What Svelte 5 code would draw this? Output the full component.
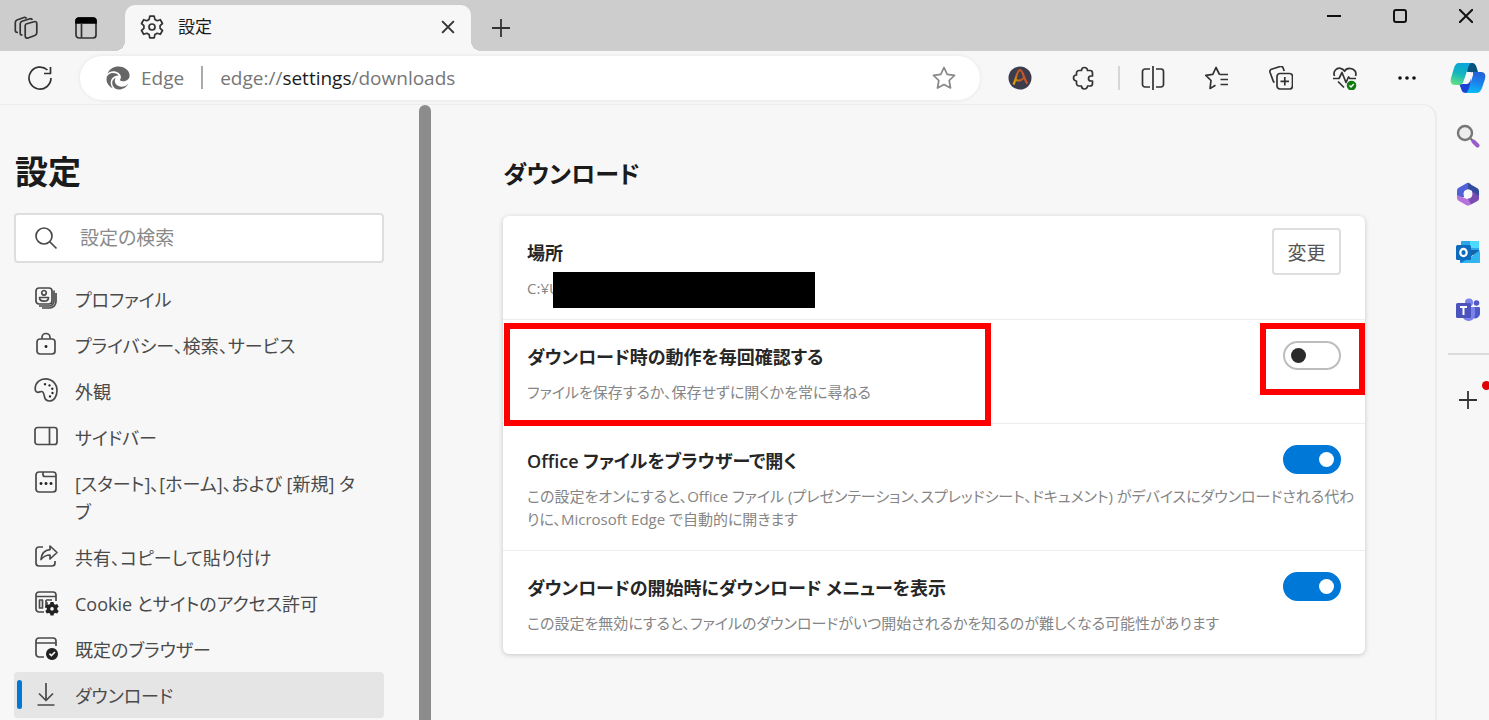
<script>
  const navItems = [
    {
      label: 'プロファイル',
      lines: [
        'M5 2h10a3 3 0 0 1 3 3v10a3 3 0 0 1-3 3H5a3 3 0 0 1-3-3V5a3 3 0 0 1 3-3z',
        'M10 4.5a2.3 2.3 0 1 0 .01 0zM5.5 11.5h9c0 2.500-1.800 3.700-4.500 3.700s-4.500-1.200-4.500-3.700z',
        'M20 4.500v10.500a5 5 0 0 1-5 5H5M22 7v8.500a6.500 6.500 0 0 1-6.500 6.500H8',
      ],
    },
    {
      label: 'プライバシー、検索、サービス',
      lines: [
        'M6 7h12a3 3 0 0 1 3 3v9a3 3 0 0 1-3 3H6a3 3 0 0 1-3-3v-9a3 3 0 0 1 3-3z',
        'M8 7V5.500a4 4 0 0 1 8 0V7',
      ],
      solids: ['M12 13a1.500 1.500 0 1 0 .01 0z'],
    },
    {
      label: '外観',
      lines: [
        'M1.200 10C1.500 4.500 6 .8 11.500.8 18 .8 23 6 23 12.500c0 6-3 10.500-7.500 10.500-3.200 0-4.700-2-5.200-5-.4-2.500-.8-4.500-2.800-4.500-1.300 0-2 .8-3.500.8-2 0-3-1.800-2.800-4.300z',
      ],
      solids: [
        'M11 5a1.200 1.200 0 1 0 .01 0z',
        'M15.500 6.200a1.200 1.200 0 1 0 .01 0z',
        'M18.300 9.500a1.200 1.200 0 1 0 .01 0z',
        'M18.500 13.800a1.200 1.200 0 1 0 .01 0z',
        'M16 17.200a1.200 1.200 0 1 0 .01 0z',
      ],
    },
    {
      label: 'サイドバー',
      lines: [
        'M3.500 3.500h17A2.500 2.500 0 0 1 23 6v12a2.500 2.500 0 0 1-2.500 2.500h-17A2.500 2.500 0 0 1 1 18V6A2.500 2.500 0 0 1 3.500 3.500zM15.500 3.500v17',
      ],
    },
    {
      label: '[スタート]、[ホーム]、および [新規] タブ',
      lines: [
        'M5 2h14a3 3 0 0 1 3 3v14a3 3 0 0 1-3 3H5a3 3 0 0 1-3-3V5a3 3 0 0 1 3-3z',
        'M9 2v2.500a2 2 0 0 0 2 2h11',
      ],
      solids: [
        'M7 12a1.500 1.500 0 1 0 .01 0z',
        'M12 12a1.500 1.500 0 1 0 .01 0z',
        'M17 12a1.500 1.500 0 1 0 .01 0z',
      ],
    },
    {
      label: '共有、コピーして貼り付け',
      lines: [
        'M9 3H5a3 3 0 0 0-3 3v13a3 3 0 0 0 3 3h13a3 3 0 0 0 3-3v-2',
        'M16 2l7 6.500-7 6.500v-4c-4 0-6.500 1.500-9 4.500.5-5.500 3.500-9.300 9-9.800z',
      ],
    },
    {
      label: 'Cookie とサイトのアクセス許可',
      lines: [
        'M10 22H5a3 3 0 0 1-3-3V5a3 3 0 0 1 3-3h14a3 3 0 0 1 3 3v6M2 6.500h20',
        'M5.500 10h3v8h-3zM12 10h6M12 13h2M12 10v8',
      ],
      solids: [
        'M16.500 12h3l.5 2 1.200.7 2-.6 1.500 2.600-1.500 1.400v1.400l1.500 1.400-1.500 2.600-2-.6-1.200.7-.5 2h-3l-.5-2-1.200-.7-2 .6-1.500-2.600 1.500-1.400v-1.400l-1.500-1.400 1.500-2.600 2 .6 1.200-.7zM18 17a1.800 1.800 0 1 0 .01 0z',
      ],
    },
    {
      label: '既定のブラウザー',
      lines: [
        'M10 21H5a3 3 0 0 1-3-3V5a3 3 0 0 1 3-3h14a3 3 0 0 1 3 3v5M2 7h20',
      ],
      solids: [
        'M18 12a6 6 0 1 0 .01 0zM14.800 18.200l1.200-1.200 1.400 1.400 3-3 1.200 1.200-4.200 4.200z',
      ],
    },
    {
      label: 'ダウンロード',
      lines: ['M12 1v17M5 11.500l7 7 7-7M3.500 23h17'],
      current: true,
    },
  ];

  let query = $state('');
  let askEachTime = $state(false);
  let openOffice = $state(true);
  let showMenu = $state(true);
</script>

<div class="window">
  <header class="tabstrip">
    <button class="strip-button" aria-label="ワークスペース">
      <svg class="icon" viewBox="0 0 24 24">
        <path d="M12 8l8-2.300a2 2 0 0 1 2.800 2v9a3 3 0 0 1-2 2.800L14 22a2 2 0 0 1-2.800-2v-9A3 3 0 0 1 12 8z" />
        <path d="M8.500 18.800l-.5.200c-1 0-1.800-.7-1.800-1.800V8A3 3 0 0 1 8 5.300l8-2.500c1-.2 2 .2 2.200 1.200" />
        <path d="M4 16.500h-.5C2 16.300 1.300 15.500 1.300 14.500V6.500A3 3 0 0 1 3 4l7-2.500c1.200-.3 2 0 2.600 1" />
      </svg>
    </button>
    <button class="strip-button" aria-label="タブ操作メニュー">
      <svg class="icon" viewBox="0 0 24 24">
        <rect x="2" y="2" width="20" height="20" rx="3" />
        <path class="black" d="M2 7V5a3 3 0 0 1 3-3h14a3 3 0 0 1 3 3v2z" />
        <path d="M7.500 7v15" />
      </svg>
    </button>

    <div class="tab">
      <svg class="icon" viewBox="0 0 24 24">
        <path d="M9.800 1.200h4.400l.7 3.200 2.300 1.300 3.100-1 2.200 3.800-2.400 2.200v2.600l2.400 2.200-2.200 3.800-3.100-1-2.300 1.300-.7 3.200H9.800l-.7-3.200-2.300-1.300-3.100 1-2.200-3.800 2.400-2.200v-2.600L1.500 8.500l2.200-3.800 3.100 1 2.300-1.300z" />
        <circle cx="12" cy="12" r="3" />
      </svg>
      <span class="tab-title">設定</span>
      <button class="tab-close" aria-label="タブを閉じる">
        <svg viewBox="0 0 12 12"><path d="M1 1l10 10M11 1L1 11" /></svg>
      </button>
    </div>
    <button class="new-tab" aria-label="新しいタブ">
      <svg viewBox="0 0 20 20"><path d="M10 1v18M1 10h18" /></svg>
    </button>

    <div class="window-controls">
      <button aria-label="最小化"><svg viewBox="0 0 14 14"><path d="M0 7h14" /></svg></button>
      <button aria-label="最大化"><svg viewBox="0 0 14 14"><rect x="1" y="1" width="12" height="12" rx="2" /></svg></button>
      <button aria-label="閉じる"><svg viewBox="0 0 14 14"><path d="M0 0l14 14M14 0L0 14" /></svg></button>
    </div>
  </header>

  <div class="toolbar">
    <button class="reload" aria-label="更新">
      <svg class="icon" viewBox="0 0 24 24"><path d="M23 12a11 11 0 1 1-3.500-8M22.500 1v6.500H16" /></svg>
    </button>

    <div class="address">
      <svg class="edge-mark" viewBox="0 0 24 24">
        <path d="M1.500 8C3 3 7.500.5 12.500.5 19 .5 24 5 23.600 10c-.3 3.500-3.500 5.500-7 5.200-1.500-.1-2.600-.5-2.600-1.100 0-.5.900-1.300.9-3C14.900 7.500 11 5.300 7.300 5.300 4.700 5.300 2.700 6.300 1.500 8z" />
        <path d="M.5 13c0-3.500 3-6 6.500-6 2.500 0 5 1.200 5.600 2.500C9 9 4.700 12 4.700 16.500c0 2.500.8 4.300 2 5.800C3 20.500.5 17 .5 13z" />
        <path d="M10 11.800C8 13.800 8.500 18 12 19.800c3.500 1.800 7.500 1 10.500-2.300-2 4-6 6.200-10 6-4-.3-6.300-3.500-6.300-6.800 0-2.200 1.500-4.200 3.800-4.900z" />
      </svg>
      <span class="brand">Edge</span>
      <span class="bar"></span>
      <span class="url">edge://<b>settings</b>/downloads</span>
      <button class="favorite" aria-label="お気に入りに追加">
        <svg class="icon" viewBox="0 0 24 24"><path d="M12 1.500l3.200 6.800 7.300 1-5.300 5.200 1.300 7.500-6.500-3.600L5.500 22l1.300-7.500L1.500 9.300l7.300-1z" /></svg>
      </button>
    </div>

    <div class="actions">
      <button class="action" aria-label="拡張機能 A">
        <svg class="icon" viewBox="0 0 24 24">
          <defs>
            <linearGradient id="flame" x1="0" y1="1" x2="1" y2="0.600">
              <stop offset="0" stop-color="#e8b400" />
              <stop offset="0.500" stop-color="#b8601f" />
              <stop offset="1" stop-color="#d2502a" />
            </linearGradient>
          </defs>
          <circle class="orb" cx="12" cy="12" r="11.500" />
          <path class="flame" d="M5.500 18.500C8 14 9 4 12 4s4 10 7.500 13.500M8 14c4 1.500 7-1 8-2.500" />
        </svg>
      </button>
      <button class="action" aria-label="拡張機能">
        <svg class="icon" viewBox="0 0 24 24"><path d="M7 4.500h2.500a3 3 0 0 1 6 0H18a2.500 2.500 0 0 1 2.500 2.500v3H19a2.500 2.500 0 0 0 0 5h1.500v2.500A2.500 2.500 0 0 1 18 20h-2.500a3 3 0 0 1-6 0H7a2.500 2.500 0 0 1-2.500-2.500V15a3 3 0 0 1 0-6V7A2.500 2.500 0 0 1 7 4.500z" /></svg>
      </button>
      <span class="separator"></span>
      <button class="action" aria-label="画面を分割する">
        <svg class="icon" viewBox="0 0 24 24"><path d="M9 3H4a2.500 2.500 0 0 0-2.500 2.500v13A2.500 2.500 0 0 0 4 21h5M15 3h5a2.500 2.500 0 0 1 2.500 2.500v13A2.500 2.500 0 0 1 20 21h-5M12 0v24" /></svg>
      </button>
      <button class="action" aria-label="お気に入り">
        <svg class="icon" viewBox="0 0 24 24"><path d="M14.500 8.500L11 1.500l-3.200 6.800-7 1 5.200 5.200L5 22.500l5.500-3.300M14.500 8.500H23M15.500 13.500H23M15.500 18.500H23" /></svg>
      </button>
      <button class="action" aria-label="コレクション">
        <svg class="icon" viewBox="0 0 24 24">
          <path d="M5.500 16.500l-1-.8L1 6.200A2.300 2.300 0 0 1 2.500 3.300l8.700-2.800A2.300 2.300 0 0 1 14 1.800l1.300 3.200" />
          <rect x="8" y="7.500" width="15.500" height="15.500" rx="3" />
          <path d="M15.800 11v8.500M11.500 15.300H20" />
        </svg>
      </button>
      <button class="action" aria-label="ブラウザーのエッセンシャル">
        <svg class="icon" viewBox="0 0 24 24">
          <path d="M1.500 10C-.5 5 4 1.500 7.500 2.300c2 .5 3.500 1.700 4 3 .7-1.500 2.500-3 5-3C21 2.300 24 6 22.500 10M0 12.500h6l3-6 4 10 2.500-5.500 1.300 1.500H23M5 15.500l6 6" />
          <circle class="good" cx="18.500" cy="19.500" r="4.800" />
          <path class="tick" d="M16.500 19.500l1.500 1.500 2.800-3" />
        </svg>
      </button>
      <button class="action more" aria-label="設定など">
        <svg viewBox="0 0 20 6"><circle cx="3" cy="3" r="1.800" /><circle cx="10" cy="3" r="1.800" /><circle cx="17" cy="3" r="1.800" /></svg>
      </button>
    </div>

    <button class="copilot" aria-label="Copilot">
      <svg viewBox="0 0 36 32">
        <defs>
          <linearGradient id="cp-left" x1="0.600" y1="0" x2="0.300" y2="1">
            <stop offset="0" stop-color="#08a4dd" />
            <stop offset="0.500" stop-color="#12b6bd" />
            <stop offset="1" stop-color="#62df84" />
          </linearGradient>
          <linearGradient id="cp-right" x1="0.600" y1="0" x2="0.400" y2="1">
            <stop offset="0" stop-color="#2460d8" />
            <stop offset="0.500" stop-color="#1b82ed" />
            <stop offset="1" stop-color="#0bbcf5" />
          </linearGradient>
        </defs>
        <path fill="#07537d" d="M16 1h6c3 0 4 2 4.800 5l1.200 4h-5c-4 0-4 3-5 5z" />
        <path fill="#1943d5" d="M9 22h7c3 0 4-2 5-6l-1 15h-4c-4 0-4.500-3-5.500-6z" />
        <path fill="url(#cp-left)" d="M9 1h13c-2 0-3 2-4 5l-4 12c-1 3-2 5-5 5H5c-4 0-5-3-4-7L4 6c1-3 2-5 5-5z" />
        <path fill="url(#cp-right)" d="M23 10h8c4 0 5 3 4 7l-3 9c-1 3-3 5-6 5H15c2 0 3-2 4-5l4-13z" />
        <path fill="#f7f7f7" d="M17 10h5c-1.500.5-2 2-2.500 3.500L16.500 22h-4c1-.8 1.500-2 2-3.500z" />
      </svg>
    </button>
  </div>

  <div class="body">
    <div class="page">
      <aside class="settings-nav">
        <div class="nav-content">
          <h1>設定</h1>
          <label class="search">
            <svg class="icon" viewBox="0 0 24 24"><circle cx="10" cy="10" r="8" /><path d="M16 16l6.500 6.500" /></svg>
            <input type="text" placeholder="設定の検索" aria-label="設定の検索" bind:value={query} />
          </label>
          <nav>
            {#each navItems as item}
              <a href="#settings" class:current={item.current} aria-current={item.current ? 'page' : undefined}>
                <svg class="icon" viewBox="0 0 24 24">
                  {#each item.lines as d}
                    <path {d} />
                  {/each}
                  {#each item.solids ?? [] as d}
                    <path class="solid" {d} />
                  {/each}
                </svg>
                <span>{item.label}</span>
              </a>
            {/each}
          </nav>
        </div>
        <div class="scrollbar"></div>
      </aside>

      <main>
        <h2>ダウンロード</h2>
        <div class="card">
          <section class="row">
            <div class="text">
              <h3>場所</h3>
              <p>C:¥U<span class="redacted"></span></p>
            </div>
            <button class="change">変更</button>
          </section>
          <section class="row">
            <div class="text">
              <h3 id="ask">ダウンロード時の動作を毎回確認する</h3>
              <p>ファイルを保存するか、保存せずに開くかを常に尋ねる</p>
            </div>
            <input class="switch" type="checkbox" role="switch" aria-labelledby="ask" bind:checked={askEachTime} />
            <span class="mark mark-text"></span>
            <span class="mark mark-switch"></span>
          </section>
          <section class="row">
            <div class="text">
              <h3 id="office">Office ファイルをブラウザーで開く</h3>
              <p>この設定をオンにすると、Office ファイル (プレゼンテーション、スプレッドシート、ドキュメント) がデバイスにダウンロードされる代わりに、Microsoft Edge で自動的に開きます</p>
            </div>
            <input class="switch" type="checkbox" role="switch" aria-labelledby="office" bind:checked={openOffice} />
          </section>
          <section class="row">
            <div class="text">
              <h3 id="menu">ダウンロードの開始時にダウンロード メニューを表示</h3>
              <p>この設定を無効にすると、ファイルのダウンロードがいつ開始されるかを知るのが難しくなる可能性があります</p>
            </div>
            <input class="switch" type="checkbox" role="switch" aria-labelledby="menu" bind:checked={showMenu} />
          </section>
        </div>
      </main>
    </div>

    <aside class="apps">
      <button aria-label="検索">
        <svg viewBox="0 0 24 24">
          <circle cx="9" cy="9" r="7" fill="#eee" stroke="#777" stroke-width="2.400" />
          <path d="M14.500 14.500l3 3" stroke="#777" stroke-width="2.400" />
          <path d="M17.500 17.500l4 4" stroke="#9a5bcb" stroke-width="4" stroke-linecap="round" />
        </svg>
      </button>
      <button aria-label="Microsoft 365">
        <svg viewBox="0 0 24 24">
          <path fill="#5162d8" d="M11 1L3 5.500C1.500 6.500 1 7.500 1 9v7l7-1V9.500l9-4L14 1.500C13 .5 12 .4 11 1z" />
          <path fill="#304b9f" d="M12 1l9 5c1.500 1 2 2 2 3.500V17l-7-3.500V9l-4-2z" />
          <path fill="#b673dc" d="M1 13v2.500c0 1.500.5 2.500 2 3.500l7.500 4.300c1 .6 2 .6 3 0L20 19l-4-5-5 3z" />
          <path fill="#7b4bb4" d="M23 14v2c0 1.500-.5 2.500-2 3.300l-6 3.200-3-6 4-2.500V9z" />
          <circle cx="12" cy="12" r="4.500" fill="#f7f7f7" />
        </svg>
      </button>
      <button aria-label="Outlook">
        <svg viewBox="0 0 24 24">
          <rect x="5" y="1" width="18" height="14" rx="1" fill="#28a8ea" />
          <path fill="#50d9ff" d="M14 1h8a1 1 0 0 1 1 1v6h-9z" />
          <path fill="#1663a8" d="M5 10h19l-10 7z" />
          <path fill="#0f78d4" d="M4 13l20 10H5a1 1 0 0 1-1-1z" />
          <path fill="#32b5ee" d="M24 11v11a1 1 0 0 1-1 1H5z" />
          <rect y="5" width="15" height="15" rx="1.500" fill="#0f6cbd" />
          <ellipse cx="7.500" cy="12.500" rx="3.200" ry="3.700" fill="none" stroke="#fff" stroke-width="2.200" />
        </svg>
      </button>
      <button aria-label="Teams">
        <svg viewBox="0 0 24 24">
          <circle cx="20.500" cy="5" r="2.800" fill="#5059c9" />
          <circle cx="13" cy="4.500" r="4" fill="#7b83eb" />
          <path fill="#5059c9" d="M17 9h6a1 1 0 0 1 1 1v6a5 5 0 0 1-7 4z" />
          <path fill="#7b83eb" d="M7 9h12v8a6.500 6.500 0 0 1-12 3z" />
          <rect y="5" width="15" height="15" rx="1.500" fill="#4b53bc" />
          <path d="M4 9h7M7.500 9v8" stroke="#fff" stroke-width="2" fill="none" />
        </svg>
      </button>
      <hr />
      <button class="add" aria-label="カスタマイズ">
        <svg viewBox="0 0 20 20"><path d="M10 1v18M1 10h18" /></svg>
        <span class="badge"></span>
      </button>
    </aside>
  </div>
</div>

<style>
  :global(body) {
    margin: 0;
  }

  .window {
    display: flex;
    flex-direction: column;
    height: 100vh;
    overflow: hidden;
    background: #f7f7f7;
    color: #1b1b1b;
    font-family: 'Open Sans', 'Noto Sans CJK JP', sans-serif;
    font-feature-settings: 'palt';
    font-size: 18px;
  }

  button {
    display: flex;
    align-items: center;
    justify-content: center;
    padding: 0;
    border: 0;
    background: none;
    color: inherit;
    font: inherit;
    font-feature-settings: inherit;
  }

  svg {
    flex: none;
    fill: none;
    stroke: #333;
    stroke-width: 2;
  }

  .icon {
    width: 24px;
    height: 24px;
    stroke-width: 1.7;
    stroke-linejoin: round;
  }

  .tabstrip {
    display: flex;
    flex: none;
    height: 51px;
    background: #cdcdcd;
  }

  .strip-button {
    width: 60px;
    padding-top: 4px;
  }

  .strip-button:first-child {
    width: 56px;
    padding-right: 4px;
  }

  .black {
    fill: #000;
    stroke: #000;
  }

  .tab {
    position: relative;
    display: flex;
    align-items: center;
    gap: 14px;
    width: 346px;
    margin: 5px 0 0 9px;
    padding: 0 16px 2px 15px;
    box-sizing: border-box;
    border-radius: 10px 10px 0 0;
    background: #f7f7f7;
  }

  .tab::before,
  .tab::after {
    position: absolute;
    bottom: 0;
    width: 10px;
    height: 10px;
    content: '';
  }

  .tab::before {
    right: 100%;
    background: radial-gradient(circle at 0 0, transparent 10px, #f7f7f7 10px);
  }

  .tab::after {
    left: 100%;
    background: radial-gradient(circle at 100% 0, transparent 10px, #f7f7f7 10px);
  }

  .tab-title {
    flex: 1;
    font-size: 17px;
    line-height: 24px;
  }

  .tab-close svg {
    width: 14px;
    height: 14px;
    stroke-width: 1.7;
  }

  .new-tab {
    width: 60px;
    padding-top: 4px;
  }

  .new-tab svg,
  .add svg {
    width: 20px;
    height: 20px;
    stroke-width: 1.8;
  }

  .window-controls {
    display: flex;
    height: 32px;
    margin-left: auto;
  }

  .window-controls button {
    width: 66px;
  }

  .window-controls button:last-child {
    width: 56px;
    padding-left: 10px;
  }

  .window-controls svg {
    width: 14px;
    height: 14px;
    stroke: #111;
  }

  .toolbar {
    display: flex;
    flex: none;
    align-items: center;
    height: 53px;
  }

  .reload {
    width: 80px;
  }

  .address {
    display: flex;
    flex: 1;
    align-items: center;
    height: 44px;
    margin-right: 8px;
    padding: 0 24px 0 26px;
    box-sizing: border-box;
    border-radius: 22px;
    background: #fff;
    box-shadow: 0 0 4px rgba(0, 0, 0, 0.08);
    color: #767676;
    font-size: 19px;
  }

  .edge-mark {
    width: 24px;
    height: 24px;
    fill: #666;
    stroke: none;
  }

  .brand {
    margin-left: 11px;
  }

  .bar {
    width: 2px;
    height: 23px;
    margin: 0 17px;
    background: #aaa;
  }

  .url {
    flex: 1;
  }

  .url b {
    color: #1b1b1b;
    font-weight: 400;
  }

  .favorite .icon {
    stroke: #888;
  }

  .actions {
    display: flex;
    align-items: center;
  }

  .action {
    width: 64px;
    height: 44px;
  }

  .orb {
    fill: #3c3c4d;
    stroke: none;
  }

  .flame {
    stroke: url(#flame);
    stroke-width: 2.2;
  }

  .separator {
    width: 2px;
    height: 24px;
    margin: 0 1px 0 2px;
    background: #d6d6d6;
  }

  .good {
    fill: #107c10;
    stroke: none;
  }

  .tick {
    stroke: #fff;
    stroke-width: 1.4;
  }

  .more {
    width: 60px;
  }

  .more svg {
    width: 20px;
    height: 6px;
    fill: #111;
    stroke: none;
  }

  .copilot {
    width: 52px;
    padding-left: 10px;
  }

  .copilot svg {
    width: 36px;
    height: 32px;
    stroke: none;
  }

  .body {
    display: flex;
    flex: 1;
    min-height: 0;
  }

  .page {
    display: flex;
    flex: 1;
    min-width: 0;
    border-top: 1px solid #ececec;
    border-right: 2px solid #ececec;
    border-top-right-radius: 14px;
  }

  .settings-nav {
    display: flex;
    flex: none;
    width: 432px;
  }

  .nav-content {
    flex: 1;
    min-width: 0;
    padding: 42px 35px 0 14px;
  }

  .scrollbar {
    width: 12px;
    margin-right: 1px;
    border-radius: 6px 6px 0 0;
    background: #8c8c8c;
  }

  h1,
  h2,
  h3,
  p {
    margin: 0;
  }

  h1 {
    margin-left: 1px;
    font-size: 33px;
    font-weight: 700;
    line-height: 50px;
  }

  .search {
    display: flex;
    align-items: center;
    gap: 22px;
    height: 50px;
    margin-top: 16px;
    padding: 0 18px;
    box-sizing: border-box;
    border: 2px solid #dedede;
    border-radius: 4px;
    background: #fff;
  }

  .search input {
    flex: 1;
    min-width: 0;
    padding: 0;
    border: 0;
    outline: 0;
    background: none;
    font: inherit;
    font-feature-settings: inherit;
    font-size: 19px;
  }

  .search input::placeholder {
    color: #8a8a8a;
  }

  nav {
    margin-top: 13px;
  }

  nav a {
    position: relative;
    display: flex;
    gap: 17px;
    padding: 10px 20px 8px;
    border-radius: 4px;
    color: #4a4a4a;
    line-height: 28px;
    text-decoration: none;
  }

  .search .icon,
  nav .icon {
    overflow: visible;
    stroke: #4a4a4a;
  }

  .solid {
    fill: #222;
    fill-rule: evenodd;
    stroke: none;
  }

  .current {
    background: #e5e5e5;
  }

  .current::before {
    position: absolute;
    top: 8px;
    bottom: 9px;
    left: 3px;
    width: 5px;
    border-radius: 3px;
    background: #0078d7;
    content: '';
  }

  main {
    flex: 1;
    min-width: 0;
    padding: 50px 70px 0 71px;
  }

  h2 {
    font-size: 24px;
    font-weight: 600;
    line-height: 38px;
  }

  .card {
    margin-top: 23px;
    border-radius: 6px;
    background: #fff;
    box-shadow: 0 1px 5px rgba(0, 0, 0, 0.2);
  }

  .row {
    position: relative;
    padding: 23px 8px 19px 24px;
    border-bottom: 1px solid #ededed;
  }

  .row:last-child {
    border-bottom: 0;
  }

  h3 {
    margin-right: 80px;
    color: #262626;
    font-size: 18px;
    font-weight: 600;
    line-height: 28px;
  }

  p {
    margin-top: 10px;
    color: #858585;
    font-size: 15px;
    line-height: 23px;
  }

  .redacted {
    position: absolute;
    top: 56px;
    left: 50px;
    width: 262px;
    height: 36px;
    background: #000;
  }

  .change {
    position: absolute;
    top: 12px;
    right: 24px;
    width: 69px;
    height: 47px;
    border: 2px solid #dedede;
    border-radius: 4px;
    color: #555;
    font-size: 19px;
  }

  .switch {
    position: absolute;
    top: 21px;
    right: 24px;
    width: 58px;
    height: 29px;
    margin: 0;
    border: 2px solid #bdbdbd;
    border-radius: 15px;
    appearance: none;
    background: #fff;
  }

  .switch::before {
    display: block;
    width: 15px;
    height: 15px;
    margin: 5px 6px;
    border-radius: 50%;
    background: #2b2b2b;
    content: '';
  }

  .switch:checked {
    border-color: #0078d7;
    background: #0078d7;
  }

  .switch:checked::before {
    margin-left: 34px;
    background: #fff;
  }

  .mark {
    position: absolute;
    top: 3px;
    box-sizing: border-box;
    border: 6px solid #f00;
    pointer-events: none;
  }

  .mark-text {
    left: 1px;
    width: 487px;
    height: 103px;
    z-index: 1;
  }

  .mark-switch {
    right: 0;
    width: 105px;
    height: 72px;
  }

  .apps {
    flex: none;
    width: 52px;
    padding-top: 3px;
    box-sizing: border-box;
  }

  .apps button {
    width: 100%;
    height: 58px;
    padding-left: 10px;
  }

  .apps svg {
    width: 24px;
    height: 24px;
    stroke: none;
  }

  .apps hr {
    height: 2px;
    margin: 14px 0 16px 11px;
    border: 0;
    background: #dcdcdc;
  }

  .apps .add {
    position: relative;
  }

  .apps .add svg {
    width: 20px;
    height: 20px;
    stroke: #333;
  }

  .badge {
    position: absolute;
    top: 10px;
    right: -2px;
    width: 9px;
    height: 9px;
    border-radius: 50%;
    background: #e00000;
  }
</style>
